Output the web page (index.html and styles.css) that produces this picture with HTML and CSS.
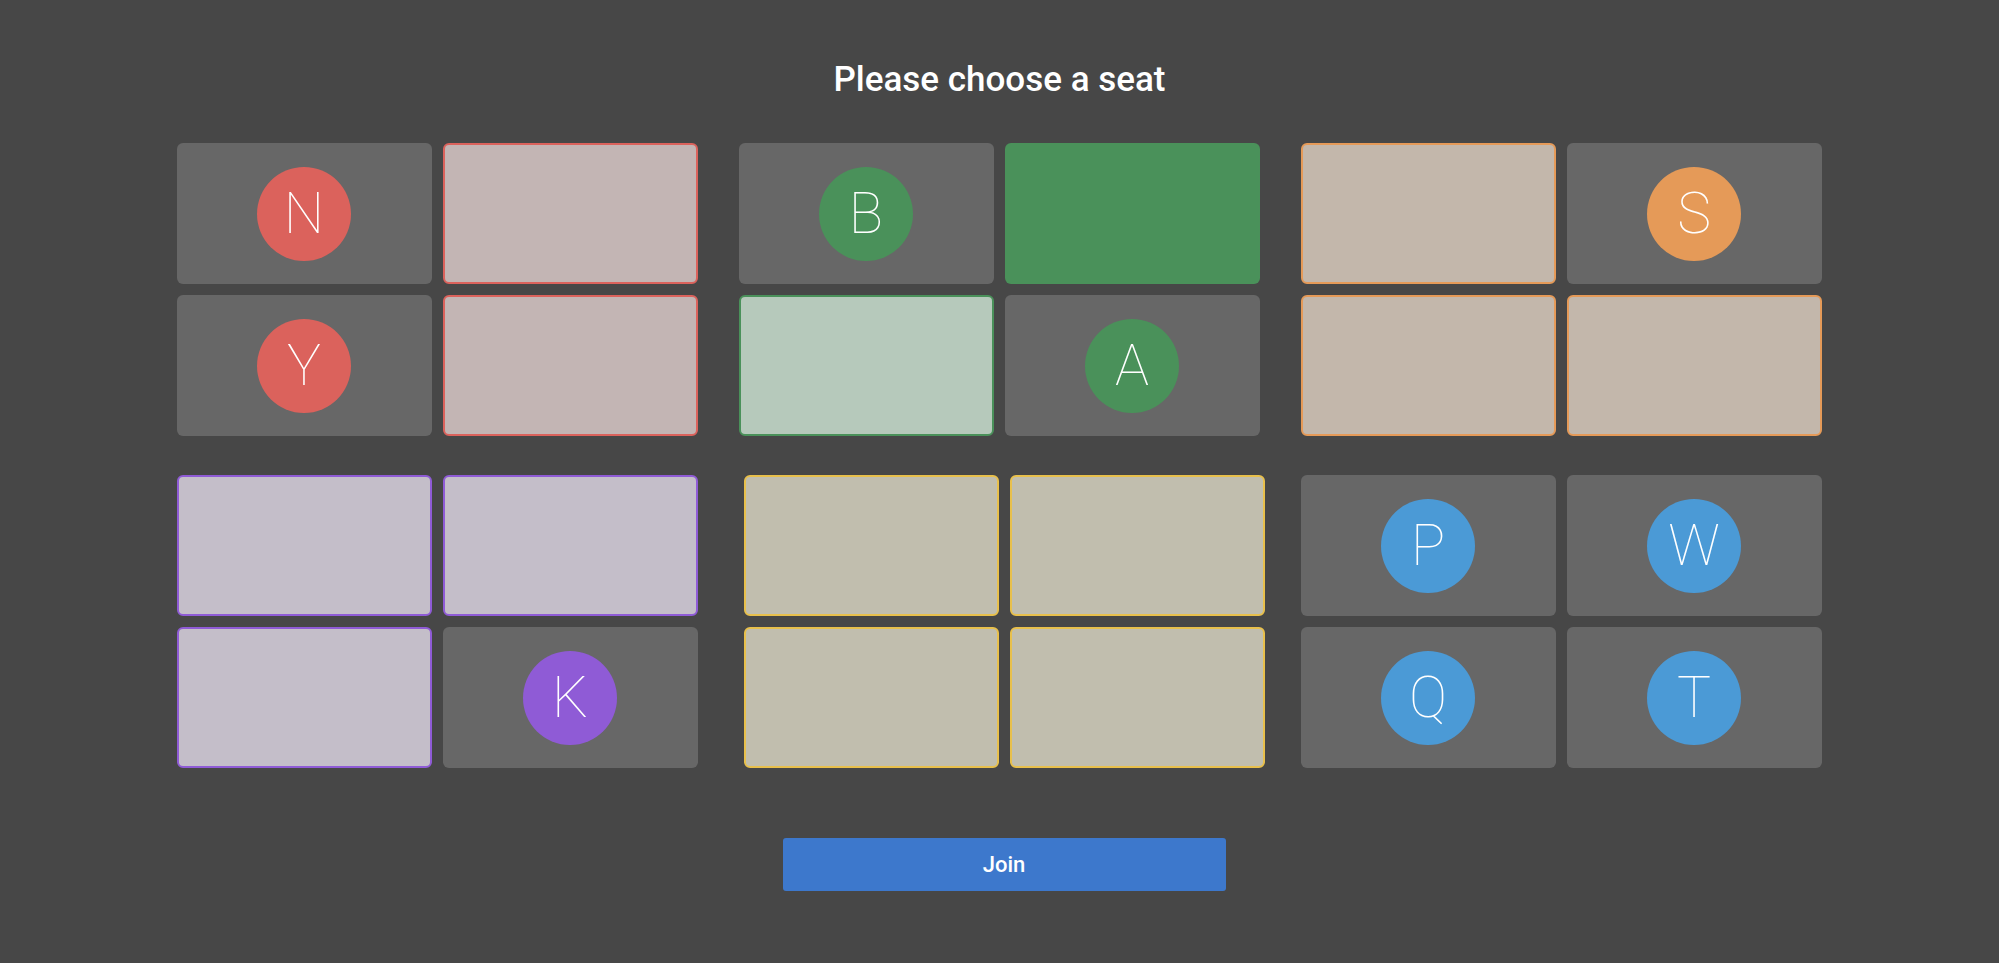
FILE: index.html
```html
<!DOCTYPE html>
<html lang="en">
<head>
<meta charset="utf-8">
<title>Please choose a seat</title>
<link rel="stylesheet" href="styles.css">
</head>
<body>
<main class="page">
  <h1 class="title">Please choose a seat</h1>
  <section class="tables">
    <div class="table">
      <div class="seat taken"><span class="avatar red">N</span></div>
      <div class="seat free red-free"></div>
      <div class="seat taken"><span class="avatar red">Y</span></div>
      <div class="seat free red-free"></div>
    </div>
    <div class="table">
      <div class="seat taken"><span class="avatar green">B</span></div>
      <div class="seat selected"></div>
      <div class="seat free green-free"></div>
      <div class="seat taken"><span class="avatar green">A</span></div>
    </div>
    <div class="table">
      <div class="seat free orange-free"></div>
      <div class="seat taken"><span class="avatar orange">S</span></div>
      <div class="seat free orange-free"></div>
      <div class="seat free orange-free"></div>
    </div>
    <div class="table">
      <div class="seat free purple-free"></div>
      <div class="seat free purple-free"></div>
      <div class="seat free purple-free"></div>
      <div class="seat taken"><span class="avatar purple">K</span></div>
    </div>
    <div class="table shifted">
      <div class="seat free yellow-free"></div>
      <div class="seat free yellow-free"></div>
      <div class="seat free yellow-free"></div>
      <div class="seat free yellow-free"></div>
    </div>
    <div class="table">
      <div class="seat taken"><span class="avatar blue">P</span></div>
      <div class="seat taken"><span class="avatar blue">W</span></div>
      <div class="seat taken"><span class="avatar blue">Q</span></div>
      <div class="seat taken"><span class="avatar blue">T</span></div>
    </div>
  </section>
  <div class="actions">
    <button class="join" type="button">Join</button>
  </div>
</main>
</body>
</html>
```

FILE: styles.css
```css
* {
  box-sizing: border-box;
}

html, body {
  margin: 0;
  padding: 0;
}

body {
  background: #474747;
  font-family: Roboto, "Liberation Sans", sans-serif;
  color: #ffffff;
  min-height: 963px;
}

.page {
  padding-top: 60px;
  display: flex;
  flex-direction: column;
  align-items: center;
}

.title {
  margin: 0;
  font-size: 35px;
  line-height: 40px;
  font-weight: 500;
  color: #ffffff;
}

.tables {
  margin-top: 43px;
  display: grid;
  grid-template-columns: repeat(3, 521px);
  column-gap: 41px;
  row-gap: 39px;
  margin-right: 1px;
}

.table {
  display: grid;
  grid-template-columns: repeat(2, 255px);
  grid-template-rows: repeat(2, 141px);
  gap: 11px;
}

.table.shifted {
  margin-left: 5px;
  margin-right: -5px;
}

.seat {
  border-radius: 6px;
  display: flex;
  align-items: center;
  justify-content: center;
}

.seat.taken {
  background: #676767;
}

.seat.free {
  border-width: 2px;
  border-style: solid;
}

.seat.red-free {
  background: #c3b5b4;
  border-color: #db625c;
}

.seat.green-free {
  background: #b6c9bb;
  border-color: #4a915a;
}

.seat.orange-free {
  background: #c3b7ab;
  border-color: #e59a58;
}

.seat.purple-free {
  background: #c4bec9;
  border-color: #8f5bd6;
}

.seat.yellow-free {
  background: #c1beae;
  border-color: #e8c04c;
}

.seat.selected {
  background: #4a915a;
}

.avatar {
  width: 94px;
  height: 94px;
  border-radius: 50%;
  display: flex;
  align-items: center;
  justify-content: center;
  font-family: Roboto, "Liberation Sans", sans-serif;
  font-weight: 100;
  font-size: 57px;
  line-height: 1;
  color: #ffffff;
}

.avatar.red { background: #db625c; }
.avatar.green { background: #4a915a; }
.avatar.orange { background: #e59a58; }
.avatar.purple { background: #8f5bd6; }
.avatar.blue { background: #4b9ad6; }

.actions {
  margin-top: 70px;
  display: flex;
  justify-content: center;
  width: 100%;
}

.join {
  margin-left: 9px;
  width: 443px;
  height: 53px;
  border: none;
  border-radius: 3px;
  background: #3d78cc;
  color: #ffffff;
  font-family: Roboto, "Liberation Sans", sans-serif;
  font-size: 22px;
  font-weight: 500;
  cursor: pointer;
}
```
